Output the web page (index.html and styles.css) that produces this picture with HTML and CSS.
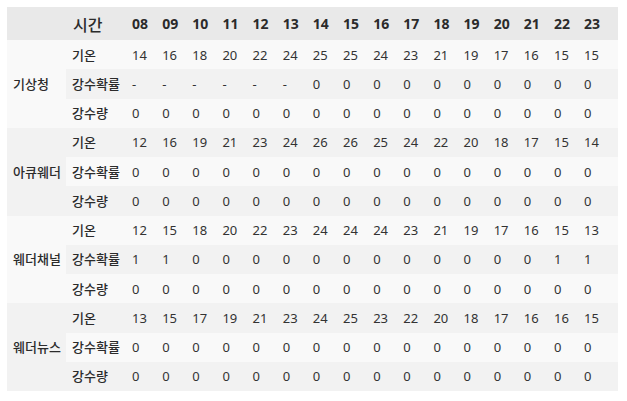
FILE: index.html
```html
<!DOCTYPE html>
<html lang="ko">
<head>
<meta charset="utf-8">
<title>날씨 비교</title>
<link rel="stylesheet" href="styles.css">
</head>
<body>
<table class="wx">
<colgroup>
<col class="c-name"><col class="c-label">
<col class="c-h"><col class="c-h"><col class="c-h"><col class="c-h"><col class="c-h"><col class="c-h"><col class="c-h"><col class="c-h"><col class="c-h"><col class="c-h"><col class="c-h"><col class="c-h"><col class="c-h"><col class="c-h"><col class="c-h"><col class="c-last">
</colgroup>
<thead>
<tr class="head">
<th></th><th class="time">시간</th>
<th>08</th><th>09</th><th>10</th><th>11</th><th>12</th><th>13</th><th>14</th><th>15</th><th>16</th><th>17</th><th>18</th><th>19</th><th>20</th><th>21</th><th>22</th><th>23</th>
</tr>
</thead>
<tbody>
<tr><td class="name" rowspan="3">기상청</td><td class="label">기온</td><td>14</td><td>16</td><td>18</td><td>20</td><td>22</td><td>24</td><td>25</td><td>25</td><td>24</td><td>23</td><td>21</td><td>19</td><td>17</td><td>16</td><td>15</td><td>15</td></tr>
<tr><td class="label">강수확률</td><td>-</td><td>-</td><td>-</td><td>-</td><td>-</td><td>-</td><td>0</td><td>0</td><td>0</td><td>0</td><td>0</td><td>0</td><td>0</td><td>0</td><td>0</td><td>0</td></tr>
<tr><td class="label">강수량</td><td>0</td><td>0</td><td>0</td><td>0</td><td>0</td><td>0</td><td>0</td><td>0</td><td>0</td><td>0</td><td>0</td><td>0</td><td>0</td><td>0</td><td>0</td><td>0</td></tr>

<tr><td class="name" rowspan="3">아큐웨더</td><td class="label">기온</td><td>12</td><td>16</td><td>19</td><td>21</td><td>23</td><td>24</td><td>26</td><td>26</td><td>25</td><td>24</td><td>22</td><td>20</td><td>18</td><td>17</td><td>15</td><td>14</td></tr>
<tr><td class="label">강수확률</td><td>0</td><td>0</td><td>0</td><td>0</td><td>0</td><td>0</td><td>0</td><td>0</td><td>0</td><td>0</td><td>0</td><td>0</td><td>0</td><td>0</td><td>0</td><td>0</td></tr>
<tr><td class="label">강수량</td><td>0</td><td>0</td><td>0</td><td>0</td><td>0</td><td>0</td><td>0</td><td>0</td><td>0</td><td>0</td><td>0</td><td>0</td><td>0</td><td>0</td><td>0</td><td>0</td></tr>

<tr><td class="name" rowspan="3">웨더채널</td><td class="label">기온</td><td>12</td><td>15</td><td>18</td><td>20</td><td>22</td><td>23</td><td>24</td><td>24</td><td>24</td><td>23</td><td>21</td><td>19</td><td>17</td><td>16</td><td>15</td><td>13</td></tr>
<tr><td class="label">강수확률</td><td>1</td><td>1</td><td>0</td><td>0</td><td>0</td><td>0</td><td>0</td><td>0</td><td>0</td><td>0</td><td>0</td><td>0</td><td>0</td><td>0</td><td>1</td><td>1</td></tr>
<tr><td class="label">강수량</td><td>0</td><td>0</td><td>0</td><td>0</td><td>0</td><td>0</td><td>0</td><td>0</td><td>0</td><td>0</td><td>0</td><td>0</td><td>0</td><td>0</td><td>0</td><td>0</td></tr>

<tr><td class="name" rowspan="3">웨더뉴스</td><td class="label">기온</td><td>13</td><td>15</td><td>17</td><td>19</td><td>21</td><td>23</td><td>24</td><td>25</td><td>23</td><td>22</td><td>20</td><td>18</td><td>17</td><td>16</td><td>16</td><td>15</td></tr>
<tr><td class="label">강수확률</td><td>0</td><td>0</td><td>0</td><td>0</td><td>0</td><td>0</td><td>0</td><td>0</td><td>0</td><td>0</td><td>0</td><td>0</td><td>0</td><td>0</td><td>0</td><td>0</td></tr>
<tr><td class="label">강수량</td><td>0</td><td>0</td><td>0</td><td>0</td><td>0</td><td>0</td><td>0</td><td>0</td><td>0</td><td>0</td><td>0</td><td>0</td><td>0</td><td>0</td><td>0</td><td>0</td></tr>
</tbody>
</table>
</body>
</html>
```
FILE: styles.css
```css
html, body {
  background: #ffffff;
}
body {
  margin: 7px;
  font-family: "Noto Sans", "Noto Sans CJK KR", sans-serif;
  color: #333333;
}
.wx {
  width: 611px;
  table-layout: fixed;
  border-collapse: collapse;
  border-spacing: 0;
}
.c-name { width: 59px; }
.c-label { width: 60px; }
.c-h { width: 30.15px; }
.c-last { width: auto; }
.wx th, .wx td {
  padding: 0 0 0 6px;
  text-align: left;
  vertical-align: middle;
  white-space: nowrap;
  overflow: visible;
}
.head {
  height: 33px;
  background: #e9e9e9;
}
.head th {
  font-size: 14px;
  font-weight: 700;
  color: #2b2b2b;
}
.head th.time {
  font-family: "Noto Sans CJK KR", sans-serif;
  font-size: 16px;
  font-weight: 500;
  padding-left: 7px;
}
.wx tbody tr {
  height: 29.25px;
}
.wx tbody tr:nth-child(odd) {
  background: #f9f9f9;
}
.wx tbody tr:nth-child(even) {
  background: #f2f2f2;
}
.wx td {
  font-size: 13px;
  line-height: 18px;
}
.wx td.name, .wx td.label {
  font-family: "Noto Sans CJK KR", sans-serif;
  font-size: 13px;
  font-weight: 500;
  color: #2b2b2b;
}
```
